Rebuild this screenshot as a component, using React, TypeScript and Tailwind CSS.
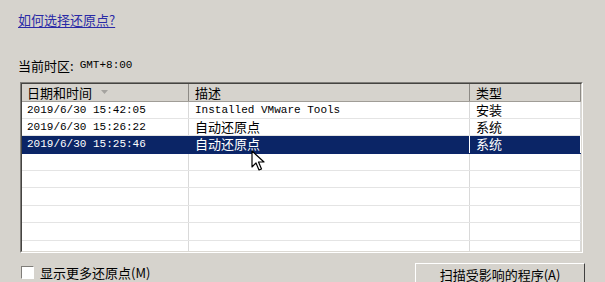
import React from 'react';

type Row = { date: string; desc: string; type: string; mono?: boolean };

const rows: Row[] = [
  { date: '2019/6/30 15:42:05', desc: 'Installed VMware Tools', type: '安装', mono: true },
  { date: '2019/6/30 15:26:22', desc: '自动还原点', type: '系统' },
  { date: '2019/6/30 15:25:46', desc: '自动还原点', type: '系统' },
];

const cjk = "font-['Noto_Sans_CJK_SC',sans-serif]";
const mono = "font-['Liberation_Mono','Noto_Sans_CJK_SC',monospace]";

function Cursor() {
  return (
    <svg className="absolute left-[251px] top-[150px]" width="14" height="22" viewBox="0 0 14 22">
      <path
        d="M1 1 L1 17 L5 13 L8 20 L10.5 19 L7.5 12 L13 12 Z"
        fill="#fff"
        stroke="#000"
        strokeWidth="1.2"
        strokeLinejoin="round"
      />
    </svg>
  );
}

export default function App() {
  const empty = Array.from({ length: 6 });

  return (
    <div className={`relative h-[282px] w-[605px] overflow-hidden bg-[#d6d3cd] text-[13px] text-black ${cjk}`}>
      <div className="pl-[18px] pt-[10px]">
        <a className="leading-[17px] text-[#2a2aa6] underline underline-offset-2">如何选择还原点?</a>
      </div>

      <div className="mt-[27px] flex items-center pl-[18px] leading-[17px]">
        当前时区:
        <span className={`${mono} ml-[6px] text-[11px]`}>GMT+8:00</span>
      </div>

      {/* list view */}
      <div className="ml-[20px] mt-[8px] h-[171px] w-[563px] border-b border-l border-r border-t border-b-white border-l-[#7f7d79] border-r-white border-t-[#7f7d79]">
        <div className="h-full overflow-hidden border border-b-[#dcd9d3] border-l-[#454441] border-r-[#dcd9d3] border-t-[#454441] bg-white">
          <div className="flex h-[18px] items-center border-b border-[#a09d97] bg-[#d6d3cd] leading-[17px]">
            <div className="flex h-full w-[167px] items-center gap-[9px] border-r border-[#8d8a85] pl-[5px]">
              日期和时间
              <svg width="7" height="4" viewBox="0 0 7 4">
                <path d="M0 0 H7 L3.5 4 Z" fill="#a5a39f" />
              </svg>
            </div>
            <div className="h-full w-[281px] border-r border-[#8d8a85] pl-[6px]">描述</div>
            <div className="h-full w-[111px] border-r border-[#8d8a85] pl-[6px]">类型</div>
          </div>

          {rows.map((r, i) => {
            const sel = i === 2;
            return (
              <div
                key={i}
                className={`flex h-[17.4px] border-b leading-[16px] ${
                  sel ? 'border-[#0a246a] bg-[#0b2566] text-white' : 'border-[#e4e4e4]'
                }`}
              >
                <div className={`w-[167px] border-r pl-[5px] text-[11px] ${mono} ${sel ? 'border-[#0b2566]' : 'border-[#d9d9d9]'}`}>
                  {r.date}
                </div>
                <div
                  className={`w-[281px] border-r pl-[6px] ${r.mono ? `${mono} text-[11px]` : ''} ${
                    sel ? 'border-white' : 'border-[#d9d9d9]'
                  }`}
                >
                  {r.desc}
                </div>
                <div className={`w-[111px] border-r pl-[6px] ${sel ? 'border-white' : 'border-[#d9d9d9]'}`}>{r.type}</div>
              </div>
            );
          })}

          {empty.map((_, i) => (
            <div key={i} className="flex h-[17.4px] border-b border-[#e4e4e4]">
              <div className="w-[167px] border-r border-[#d9d9d9]" />
              <div className="w-[281px] border-r border-[#d9d9d9]" />
              <div className="w-[111px] border-r border-[#d9d9d9]" />
            </div>
          ))}
        </div>
      </div>

      <div className="mt-[10px] flex items-start justify-between pl-[21px] pr-[20px]">
        <label className="mt-[3px] flex items-center gap-[6px] leading-[14px]">
          <span className="h-[13px] w-[13px] border border-b-white border-l-[#7f7d79] border-r-white border-t-[#7f7d79] bg-white" />
          显示更多还原点(M)
        </label>
        <button className="h-[24px] w-[170px] border border-b-[#404040] border-l-white border-r-[#404040] border-t-white bg-[#d6d3cd] leading-[20px]">
          扫描受影响的程序(A)
        </button>
      </div>

      <Cursor />
    </div>
  );
}
